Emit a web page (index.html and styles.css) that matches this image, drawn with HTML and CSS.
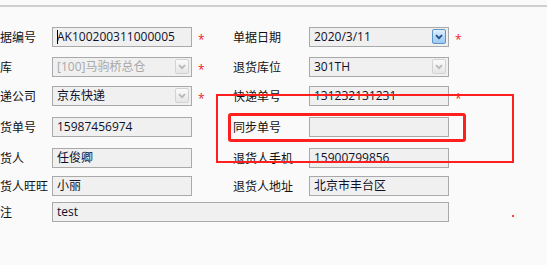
FILE: index.html
```html
<!DOCTYPE html>
<html lang="zh-CN">
<head>
<meta charset="utf-8">
<title>退货单</title>
<link rel="stylesheet" href="styles.css">
</head>
<body>
<div class="page">
  <div class="topline"></div>
  <div class="form">
    <!-- row 1 -->
    <div class="label r1">单据编号</div>
    <div class="field r1"><span class="caret"></span>AK100200311000005</div>
    <div class="star r1">*</div>
    <div class="label r1">单据日期</div>
    <div class="field r1">2020/3/11<span class="btn btn-blue"><svg viewBox="0 0 8 6" width="8" height="6"><path d="M1 1.2 L4 4.2 L7 1.2" fill="none" stroke="#1f4f86" stroke-width="1.8"/></svg></span></div>
    <div class="star r1">*</div>

    <!-- row 2 -->
    <div class="label r2">仓库</div>
    <div class="field r2 disabled">[100]马驹桥总仓<span class="btn btn-gray"><svg viewBox="0 0 8 6" width="8" height="6"><path d="M1 1.2 L4 4.2 L7 1.2" fill="none" stroke="#b8b8b8" stroke-width="1.8"/></svg></span></div>
    <div class="star r2">*</div>
    <div class="label r2">退货库位</div>
    <div class="field r2">301TH<span class="btn btn-gray"><svg viewBox="0 0 8 6" width="8" height="6"><path d="M1 1.2 L4 4.2 L7 1.2" fill="none" stroke="#b8b8b8" stroke-width="1.8"/></svg></span></div>
    <div class="star r2"></div>

    <!-- row 3 -->
    <div class="label r3">快递公司</div>
    <div class="field r3">京东快递<span class="btn btn-gray"><svg viewBox="0 0 8 6" width="8" height="6"><path d="M1 1.2 L4 4.2 L7 1.2" fill="none" stroke="#b8b8b8" stroke-width="1.8"/></svg></span></div>
    <div class="star r3">*</div>
    <div class="label r3">快递单号</div>
    <div class="field r3">131232131231</div>
    <div class="star r3">*</div>

    <!-- row 4 -->
    <div class="label r4">退货单号</div>
    <div class="field r4">15987456974</div>
    <div class="star r4"></div>
    <div class="label r4">同步单号</div>
    <div class="field r4"></div>
    <div class="star r4"></div>

    <!-- row 5 -->
    <div class="label r5">退货人</div>
    <div class="field r5">任俊卿</div>
    <div class="star r5"></div>
    <div class="label r5">退货人手机</div>
    <div class="field r5">15900799856</div>
    <div class="star r5"></div>

    <!-- row 6 -->
    <div class="label r6">退货人旺旺</div>
    <div class="field r6">小丽</div>
    <div class="star r6"></div>
    <div class="label r6">退货人地址</div>
    <div class="field r6">北京市丰台区</div>
    <div class="star r6"></div>

    <!-- row 7 -->
    <div class="label r7">备注</div>
    <div class="field r7 wide">test</div>
  </div>

  <div class="mark mark-outer"></div>
  <div class="mark mark-inner"></div>
  <div class="mark-dot"></div>
</div>
</body>
</html>
```

FILE: styles.css
```css
html, body {
  margin: 0;
  padding: 0;
  background: #fafafa;
}

.page {
  position: relative;
  width: 547px;
  height: 265px;
  overflow: hidden;
  font-family: "Open Sans", "Noto Sans CJK SC", sans-serif;
  font-size: 12px;
  color: #111;
}

.topline {
  margin-top: 5px;
  height: 2px;
  background: #cfcfcf;
}

.form {
  display: grid;
  grid-template-columns: 64px 140px 41px 76px 140px 20px;
  grid-template-rows: 30px 29px 31px 31px 28px 26px 20px;
  margin-top: 20px;
  margin-left: -12px;
}

.label {
  height: 20px;
  line-height: 20px;
  white-space: nowrap;
  font-family: "Noto Sans CJK SC", sans-serif;
  color: #111;
}

.field {
  position: relative;
  box-sizing: border-box;
  height: 20px;
  line-height: 18px;
  padding-left: 4px;
  border: 1px solid #a9a9a9;
  background: #f0f0f0;
  white-space: nowrap;
  color: #10102a;
}

.field.disabled {
  color: #a8a8a8;
}

.field.wide {
  grid-column: 2 / 6;
}

.caret {
  display: inline-block;
  width: 1px;
  height: 14px;
  background: #000;
  vertical-align: -3px;
  margin-right: -1px;
}

.star {
  height: 20px;
  line-height: 20px;
  padding-left: 6px;
  padding-top: 3px;
  box-sizing: border-box;
  color: #f02020;
  font-size: 12px;
}

.btn {
  position: absolute;
  right: 2px;
  top: 1px;
  width: 14px;
  height: 15px;
  box-sizing: border-box;
  border-radius: 2px;
  display: flex;
  align-items: center;
  justify-content: center;
}

.btn-blue {
  border: 1px solid #5d95c9;
  background: linear-gradient(#e3f1fd, #b5d8f7 55%, #9ccaf3);
}

.btn-gray {
  border: 1px solid #d2d2d2;
  background: linear-gradient(#fafafa, #e6e6e6);
}

.mark {
  position: absolute;
  box-sizing: border-box;
  border-style: solid;
  border-color: #ff1f1f;
}

.mark-outer {
  left: 216px;
  top: 94px;
  width: 298px;
  height: 69px;
  border-width: 2px;
}

.mark-inner {
  left: 228px;
  top: 113px;
  width: 238px;
  height: 29px;
  border-width: 3px;
  border-radius: 3px;
}

.mark-dot {
  position: absolute;
  left: 512px;
  top: 215px;
  width: 2px;
  height: 2px;
  background: #ff4040;
}
```
